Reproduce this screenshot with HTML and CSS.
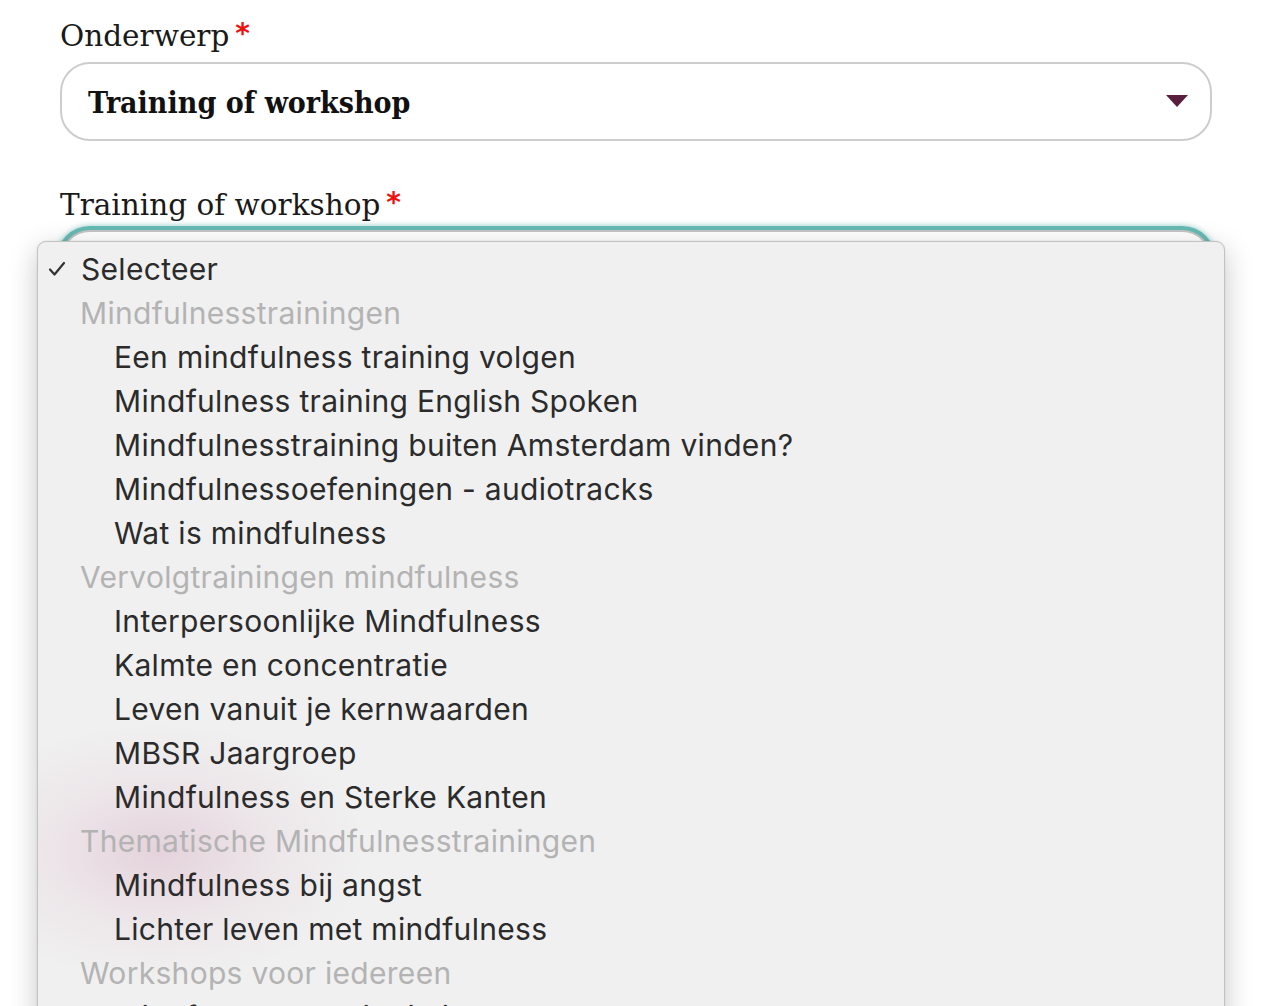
FILE: index.html
```html
<!DOCTYPE html>
<html lang="nl">
<head>
<meta charset="utf-8">
<title>Formulier</title>
<link rel="stylesheet" href="styles.css">
</head>
<body>
<main class="form">
  <div class="field">
    <label class="label">Onderwerp<span class="req">*</span></label>
    <div class="select">
      <span class="select-value">Training of workshop</span>
      <svg class="caret" width="22" height="12" viewBox="0 0 22 12"><polygon points="0,0 22,0 11,12" fill="#5a1f3e"/></svg>
    </div>
  </div>
  <div class="field field-2">
    <label class="label">Training of workshop<span class="req">*</span></label>
    <div class="select select-focus"></div>
  </div>

  <div class="menu">
    <div class="glow"></div>
    <ul class="menu-list">
      <li class="opt checked"><svg class="check" width="18" height="16" viewBox="0 0 18 16"><path d="M2 8.5 L6.5 13.5 L16 2" fill="none" stroke="#333" stroke-width="2.2" stroke-linecap="round" stroke-linejoin="round"/></svg>Selecteer</li>
      <li class="group">Mindfulnesstrainingen</li>
      <li class="opt">Een mindfulness training volgen</li>
      <li class="opt">Mindfulness training English Spoken</li>
      <li class="opt">Mindfulnesstraining buiten Amsterdam vinden?</li>
      <li class="opt">Mindfulnessoefeningen - audiotracks</li>
      <li class="opt">Wat is mindfulness</li>
      <li class="group">Vervolgtrainingen mindfulness</li>
      <li class="opt">Interpersoonlijke Mindfulness</li>
      <li class="opt">Kalmte en concentratie</li>
      <li class="opt">Leven vanuit je kernwaarden</li>
      <li class="opt">MBSR Jaargroep</li>
      <li class="opt">Mindfulness en Sterke Kanten</li>
      <li class="group">Thematische Mindfulnesstrainingen</li>
      <li class="opt">Mindfulness bij angst</li>
      <li class="opt">Lichter leven met mindfulness</li>
      <li class="group">Workshops voor iedereen</li>
      <li class="opt">Mindfulness meditatie in de natuur</li>
    </ul>
  </div>
</main>
</body>
</html>
```
FILE: styles.css
```css
* { box-sizing: border-box; }
html, body { margin: 0; padding: 0; background: #fff; }
body { width: 1264px; height: 1006px; overflow: hidden; }

.form {
  position: relative;
  padding: 14px 52px 0 60px;
  display: flex;
  flex-direction: column;
  gap: 42px;
}

.field { display: flex; flex-direction: column; gap: 3px; }
.field-2 { gap: 2px; }

.label {
  font-family: "DejaVu Serif", serif;
  font-size: 29.5px;
  line-height: 44px;
  color: #1a1a1a;
  letter-spacing: 0;
  font-weight: normal;
}
.req {
  color: #ee1111;
  font-family: "DejaVu Sans", sans-serif;
  font-weight: bold;
  font-size: 28px;
  margin-left: 6px;
  letter-spacing: 0;
  position: relative;
  top: -3px;
}

.select {
  height: 79px;
  border: 2px solid #cdcdcd;
  border-radius: 30px;
  display: flex;
  align-items: center;
  justify-content: space-between;
  padding: 0 22px 0 26px;
  background: #fff;
}
.select-value {
  font-family: "DejaVu Serif Condensed", "DejaVu Serif", serif;
  font-weight: bold;
  font-size: 30px;
  color: #111;
  letter-spacing: 0;
  position: relative;
  top: 1px;
}
.caret { position: relative; top: -1px; }

.select-focus {
  box-shadow: 0 0 0 4px #66bab3, 0 0 5px 5px rgba(99, 184, 177, 0.55);
  border-color: #c4c4c4;
}

.menu {
  position: absolute;
  left: 37px;
  top: 241px;
  width: 1188px;
  height: 800px;
  background: #f0f0f0;
  border: 1px solid #c2c2c2;
  border-radius: 9px;
  box-shadow: 0 8px 28px rgba(0, 0, 0, 0.22), 0 0 2px rgba(0,0,0,0.1);
  overflow: hidden;
}
.glow {
  position: absolute;
  left: -90px;
  top: 480px;
  width: 420px;
  height: 260px;
  background: radial-gradient(ellipse at center, rgba(215, 175, 195, 0.45) 0%, rgba(225, 195, 210, 0.2) 40%, rgba(240, 240, 240, 0) 70%);
  pointer-events: none;
}
.menu-list {
  position: relative;
  list-style: none;
  margin: 0;
  padding: 5px 0 0 0;
  font-family: "Inter", "Roboto", sans-serif;
  font-size: 30px;
  letter-spacing: 0.3px;
}
.menu-list li {
  height: 44px;
  line-height: 44px;
  white-space: nowrap;
}
.group { padding-left: 42px; color: #b3b3b3; }
.opt { padding-left: 76px; color: #2b2b2b; }
.opt.checked {
  padding-left: 10px;
  display: flex;
  align-items: center;
}
.check { margin-right: 15px; flex: none; }
```
